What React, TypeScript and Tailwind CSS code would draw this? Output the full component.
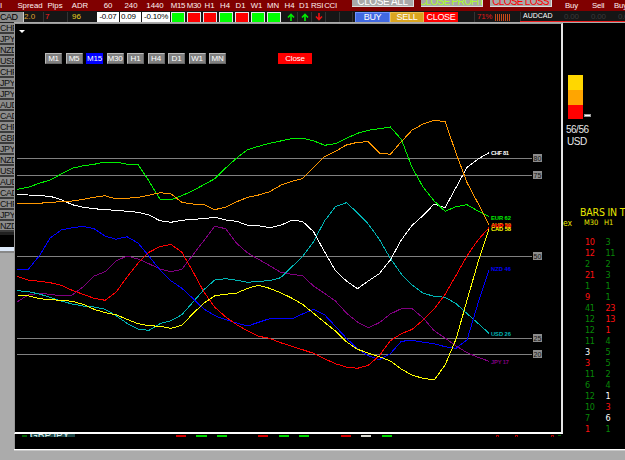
import clsx from 'clsx';

interface Column {
  label: string;
  width: string;
}

interface Series {
  name: string;
  value: number;
  color: string;
  labelY: number;
  points: number[];
}

const columns: Column[] = [
  { label: 'I', width: 'w-[2px]' },
  { label: 'Spread', width: 'ml-[14px] w-[28px]' },
  { label: 'Pips', width: 'w-[22px]' },
  { label: 'ADR', width: 'w-[28px]' },
  { label: '60', width: 'w-[28px]' },
  { label: '240', width: 'w-[18px]' },
  { label: '1440', width: 'w-[30px]' },
  { label: 'M15', width: 'w-[16px] tracking-[-0.3px]' },
  { label: 'M30', width: 'w-[16px] tracking-[-0.3px]' },
  { label: 'H1', width: 'w-[15px]' },
  { label: 'H4', width: 'w-[16px]' },
  { label: 'D1', width: 'w-[15px]' },
  { label: 'W1', width: 'w-[17px]' },
  { label: 'MN', width: 'w-[16px]' },
  { label: 'H4', width: 'w-[17px]' },
  { label: 'D1', width: 'w-[12px]' },
  { label: 'RSI', width: 'w-[14px] tracking-[-0.3px]' },
  { label: 'CCI', width: 'w-[13px] tracking-[-0.3px]' },
];

const signals = ['up', 'down', 'down', 'up', 'down', 'up', 'up'];

const pairs = [
  'CHF', 'JPY', 'NZD', 'USD', 'CHF', 'JPY', 'JPY', 'AUD', 'CAD', 'CHF',
  'GBP', 'JPY', 'NZD', 'USD', 'AUD', 'CAD', 'CHF', 'JPY', 'NZD',
];

const timeframes = ['M1', 'M5', 'M15', 'M30', 'H1', 'H4', 'D1', 'W1', 'MN'];

// r = red, g = green, w = white
const bars: [number, string, number, string][] = [
  [10, 'r', 3, 'g'],
  [12, 'r', 11, 'g'],
  [2, 'g', 2, 'g'],
  [21, 'r', 3, 'g'],
  [1, 'g', 1, 'g'],
  [9, 'r', 1, 'g'],
  [41, 'g', 23, 'r'],
  [12, 'g', 13, 'r'],
  [12, 'g', 1, 'r'],
  [11, 'g', 4, 'g'],
  [3, 'w', 5, 'g'],
  [3, 'r', 5, 'g'],
  [11, 'g', 2, 'g'],
  [6, 'g', 4, 'g'],
  [12, 'g', 1, 'w'],
  [10, 'g', 3, 'r'],
  [7, 'g', 6, 'w'],
  [1, 'r', 1, 'g'],
];

const barColors: Record<string, string> = {
  r: 'text-[#ff1010]',
  g: 'text-[#078807]',
  w: 'text-white',
};

const levels = [
  { value: 80, y: 158.5 },
  { value: 75, y: 175.5 },
  { value: 50, y: 256.5 },
  { value: 25, y: 338.5 },
  { value: 20, y: 354.5 },
];

const series: Series[] = [
  {
    name: 'JPY', value: 17, color: '#800080', labelY: 361.5,
    points: [301.7, 295, 293.3, 294.3, 296, 295, 286.7, 276, 271.7, 261, 256, 259, 263.7, 269, 271.7, 269.3, 255, 240.7, 226.3, 228.7, 243.3, 253, 259.3, 265.7, 272.2, 274.3, 275.7, 286, 293.3, 301, 313, 322, 327.7, 322.7, 314, 308.7, 308.7, 318, 330.7, 338, 346, 352.7, 357.3, 361.3],
  },
  {
    name: 'USD', value: 26, color: '#00b4b4', labelY: 334,
    points: [290.7, 291.7, 294, 297.3, 301, 304, 306, 307, 309.3, 315.7, 323.3, 329, 330.3, 323.7, 320.7, 314.7, 302.3, 289.7, 280, 278.7, 280.3, 282.3, 281.3, 280.7, 277.7, 267, 256.7, 241.7, 221, 206.7, 202.7, 212.7, 224, 239.3, 258.3, 274, 285, 293.3, 296.3, 297.3, 303.7, 313.7, 323.3, 333.3],
  },
  {
    name: 'NZD', value: 46, color: '#0000ff', labelY: 269,
    points: [269.3, 269.3, 256, 238, 230, 227.7, 226.3, 228.7, 236, 239.3, 236.7, 243, 256, 270, 280.7, 288.3, 298.3, 309, 315.7, 319.7, 323, 326, 322.3, 318.7, 318.3, 319, 314, 309.3, 314.7, 326.3, 338.3, 348.7, 355.7, 359.7, 353.7, 341.3, 340.3, 342.3, 343.7, 346.7, 348.3, 339.7, 303.3, 269.7],
  },
  {
    name: 'CHF', value: 81, color: '#ffffff', labelY: 152.5,
    points: [194.3, 195, 195.7, 196.3, 199.7, 204.7, 207.3, 208.7, 209.7, 210.3, 211.3, 212.3, 215, 220.7, 222.3, 220.3, 219.3, 218.7, 217.3, 220, 221.3, 225.3, 225.7, 227.7, 225.3, 220.3, 221.3, 231.7, 251.7, 270.7, 281, 288.7, 281, 273.7, 260, 240, 225.3, 215.3, 204, 207.7, 187.3, 167.3, 159, 152.7],
  },
  {
    name: 'EUR', value: 62, color: '#00f000', labelY: 217.5,
    points: [189.3, 187.3, 183.3, 180, 174, 168.3, 165.7, 164.3, 162, 162, 164.3, 164.3, 181, 199, 199.7, 195.7, 190.7, 184.7, 178.7, 168, 158, 149.7, 146.3, 143.3, 141, 138.7, 138.3, 140.7, 145.3, 143.7, 138.3, 133.3, 130.3, 128.7, 127, 139.3, 167.7, 187.3, 201, 211.3, 206.7, 204.7, 211, 216.3],
  },
  {
    name: 'AUD', value: 59, color: '#ff9800', labelY: 225,
    points: [203.3, 204, 203.3, 202.3, 201.7, 201, 199.3, 197.3, 195.7, 199, 198.3, 197.3, 195.3, 192.7, 193.7, 202.3, 204, 204.3, 209.7, 207, 201.7, 197.3, 195, 191.7, 185.3, 181.3, 178.7, 167.3, 156.7, 151.3, 145, 142.3, 141.7, 153, 154.3, 141.7, 130, 124, 120.3, 121.7, 153.3, 182.7, 203.3, 225],
  },
  {
    name: 'GBP', value: 59, color: '#ff0000', labelY: 226,
    points: [276.3, 280, 281.3, 282.7, 285.3, 290.3, 294.3, 298.3, 300.3, 292.3, 277, 263.3, 252.3, 246.7, 244.3, 252.3, 271.3, 291.7, 307.3, 317, 324.7, 331, 336.3, 338.3, 342.7, 346.3, 349.7, 353.3, 358.7, 363.7, 367, 368.3, 365.3, 355.7, 340.7, 333.7, 329.3, 320, 309, 294.3, 275.3, 255.7, 240, 227.7],
  },
  {
    name: 'CAD', value: 58, color: '#ffff00', labelY: 228.5,
    points: [295, 295.7, 298.7, 299.7, 300.3, 301.3, 304.3, 309.3, 312.7, 314.7, 319.3, 323.7, 325.7, 326.3, 328.3, 325.3, 313.7, 303.3, 295.7, 294.3, 293, 288.3, 285.3, 288.3, 292.7, 298, 304.3, 313.3, 322.3, 331, 341.7, 349.3, 353, 356.7, 361, 369, 375.3, 378.3, 380, 365, 339, 300, 262.3, 229],
  },
];

const toPolyline = (points: number[]) =>
  points.map((y, i) => `${(17.3 + i * 10.97).toFixed(1)},${y}`).join(' ');

const Arrow = ({ down = false }: { down?: boolean }) => (
  <svg viewBox="0 0 8 8" className={clsx('h-[8px] w-[8px]', down ? 'rotate-180 text-[#ee1111]' : 'text-[#00ee00]')}>
    <path d="M4 8V1.5M1 4.5L4 1.3L7 4.5" fill="none" stroke="currentColor" strokeWidth="1.6" />
  </svg>
);

const HeaderRow = () => (
  <div className="flex h-[11px] shrink-0 overflow-hidden bg-[#800000] text-[7.8px] leading-[11px] text-[#fff0f0]">
    {columns.map((col, i) => (
      <span key={i} className={clsx('flex shrink-0 justify-center whitespace-nowrap', col.width)}>{col.label}</span>
    ))}
    <div className="ml-[15px] flex shrink-0 gap-[7px] text-[10px] leading-[4px]">
      <span className="flex h-[7px] w-[62px] justify-center border-r border-b border-[#ddd] bg-[#a9a9a9] tracking-[-0.4px] whitespace-nowrap text-white">CLOSE ALL</span>
      <span className="flex h-[7px] w-[62px] justify-center overflow-hidden border-r border-b border-[#ddd] bg-[#a9a9a9] tracking-[-0.7px] whitespace-nowrap text-[#adff2f]">CLOSE PROFIT</span>
      <span className="flex h-[7px] w-[62px] justify-center border-r border-b border-[#ddd] bg-[#a9a9a9] tracking-[-0.7px] whitespace-nowrap text-[#ff0000]">CLOSE LOSS</span>
    </div>
    <span className="ml-[13px] w-[27px] shrink-0 tracking-[-0.2px]">Buy</span>
    <span className="w-[22px] shrink-0 tracking-[-0.2px]">Sell</span>
    <span className="shrink-0 tracking-[-0.2px]">Buy</span>
  </div>
);

const PairRow = () => (
  <div className="flex h-[11px] shrink-0 overflow-hidden bg-[#161616] pt-px text-[8px] leading-[10px]">
    <span className="w-[24px] shrink-0 border-r border-[#ccc] bg-[#8b8b8b] text-[9px] tracking-[-0.5px] text-black">CAD</span>
    <span className="w-[20px] shrink-0 border-r border-[#333] text-[#e0a030]">2.0</span>
    <span className="w-[24px] shrink-0 border-r border-[#333] pl-px text-[#ff2020]">7</span>
    <span className="w-[29px] shrink-0 pl-[4px] text-[#e6d020]">96</span>
    <div className="flex w-[73px] shrink-0 gap-px tracking-[-0.2px] text-black">
      <span className="w-[22px] bg-white text-center">-0.07</span>
      <span className="w-[21px] bg-white pl-px">0.09</span>
      <span className="w-[28px] bg-white text-center">-0.10%</span>
    </div>
    <div className="ml-px flex shrink-0 gap-[2px]">
      {signals.map((signal, i) => (
        <span key={i} className={clsx('w-[14px] border border-b-0 border-[#e8e8e8]', signal === 'up' ? 'bg-[#00ff00]' : 'bg-[#ff0000]')} />
      ))}
    </div>
    <div className="ml-[3px] flex shrink-0">
      <span className="flex w-[14px] items-center justify-center border-r border-[#333]"><Arrow /></span>
      <span className="flex w-[14px] items-center justify-center border-r border-[#333]"><Arrow /></span>
      <span className="flex w-[14px] items-center justify-center border-r border-[#333]"><Arrow down /></span>
      <span className="w-[14px] border-r border-[#333]" />
      <span className="w-[13px] border-r border-[#333]" />
    </div>
    <div className="ml-[2px] flex shrink-0 text-center text-[9px] tracking-[-0.3px] text-white">
      <span className="w-[35px] border border-b-0 border-[#6e93ff] bg-[#4169e1] leading-[9px]">BUY</span>
      <span className="w-[34px] border border-b-0 border-[#e8bf50] bg-[#daa520] leading-[9px]">SELL</span>
      <span className="w-[34px] bg-[#ff0000]">CLOSE</span>
    </div>
    <span className="w-[17px] shrink-0 border-r border-[#333]" />
    <span className="w-[20px] shrink-0 pl-[2px] tracking-[-0.3px] text-[#e01818]">71%</span>
    <div className="flex shrink-0 items-end gap-px pb-px">
      {Array.from({ length: 8 }).map((_, i) => (
        <span key={i} className="h-[7px] w-px bg-[#c84818]" />
      ))}
    </div>
    <div className="ml-[10px] flex w-[105px] shrink-0 border-b border-[#f02020] text-[#3a3a3a]">
      <span className="w-[44px] shrink-0 border-l border-[#333] pl-[2px] text-[7px] leading-[8px] text-white">AUDCAD</span>
      <span className="w-[27px] shrink-0 tracking-[-0.2px]">0.00</span>
      <span className="w-[27px] shrink-0 tracking-[-0.2px]">0.00</span>
      <span className="shrink-0 tracking-[-0.2px]">0.00</span>
    </div>
  </div>
);

const PairList = () => (
  <div className="flex w-[14px] shrink-0 flex-col overflow-hidden">
    <div className="h-[213px] shrink-0 overflow-hidden bg-[#202020] pt-px">
      {pairs.map((pair, i) => (
        <div key={i} className="h-[11px] overflow-hidden border-b-2 border-[#3a3a3a] bg-[#8b8b8b] text-[9px] leading-[10px] tracking-[-0.5px] text-[#111]">
          {pair}
        </div>
      ))}
    </div>
    <div className="h-[12px] shrink-0 bg-black" />
    <div className="h-[4px] shrink-0 bg-[#dce8f8]" />
    <div className="h-[2px] shrink-0 bg-[#888]" />
  </div>
);

const StrengthChart = () => (
  <div className="flex w-[549px] shrink-0 flex-col border-t border-r-2 border-b-2 border-l border-t-[#999] border-r-[#e4e4e4] border-b-white border-l-[#999] bg-black">
    <div className="h-[29px] shrink-0 pt-[6px] pl-[4px]">
      <svg viewBox="0 0 6 3" className="h-[3px] w-[6px]">
        <path d="M0 0H6L3 3Z" fill="#fff" />
      </svg>
    </div>
    <div className="flex h-[27px] shrink-0 items-start pl-[30px] text-[8px] text-white">
      <div className="flex gap-[3.5px]">
        {timeframes.map((tf) => (
          <span
            key={tf}
            className={clsx(
              'flex h-[11px] w-[17px] justify-center border leading-[9.5px] tracking-[-0.2px]',
              tf === 'M15' ? 'border-[#0000ff] bg-[#0000ff]' : 'border-t-[#bbb] border-r-[#666] border-b-[#666] border-l-[#bbb] bg-[#808080]',
            )}
          >
            {tf}
          </span>
        ))}
      </div>
      <span className="ml-[52px] h-[11px] w-[34px] bg-[#ff0000] text-center leading-[11px] tracking-[-0.2px]">Close</span>
    </div>
    <svg viewBox="15 80 546 352" className="h-[352px] w-[546px] shrink-0">
      {levels.map((level) => (
        <g key={level.value}>
          <line x1="17" x2="532" y1={level.y} y2={level.y} stroke="#808080" />
          <rect x="533" y={level.y - 4.5} width="9" height="8" fill="#8c8c8c" />
          <text x="537.5" y={level.y + 2.3} textAnchor="middle" fontSize="7" fill="#111">{level.value}</text>
        </g>
      ))}
      {series.map((s) => (
        <g key={s.name}>
          <polyline points={toPolyline(s.points)} fill="none" stroke={s.color} strokeWidth="1" shapeRendering="crispEdges" />
          <text x="491" y={s.labelY + 2} fontSize="5.8" fontWeight="bold" textLength={s.name === 'CHF' || s.name === 'JPY' ? 18 : 20} fill={s.color}>
            {s.name} {s.value}
          </text>
        </g>
      ))}
    </svg>
  </div>
);

const SidePanel = () => (
  <div className="flex w-[62px] shrink-0 flex-col overflow-hidden bg-black">
    <div className="mt-[52px] flex items-end pl-[5px]">
      <div className="w-[15px]">
        <div className="h-[15px] bg-[#ffd700]" />
        <div className="h-[15px] bg-[#ffa500]" />
        <div className="h-[14px] bg-[#ff0000]" />
      </div>
      <div className="mb-[2px] ml-px h-[3px] w-[7px] border border-[#999] bg-white" />
    </div>
    <div className="mt-[5px] pl-[3px] text-[10px] leading-[12px] tracking-[-0.5px] text-[#e8e8e8]">
      <div>56/56</div>
      <div className="pl-px">USD</div>
    </div>
    <div className="mt-[58px] pl-[17px] font-['DejaVu_Sans_Condensed','DejaVu_Sans',sans-serif] text-[10.5px] leading-[12px] tracking-[-0.2px] whitespace-nowrap text-[#e8e800]">
      BARS IN T
    </div>
    <div className="flex font-['DejaVu_Sans_Condensed','DejaVu_Sans',sans-serif] text-[7.5px] leading-[10px] tracking-[-0.1px] text-[#e8e800]">
      <span className="w-[21px] text-[8.5px]">ex</span>
      <span className="w-[20px]">M30</span>
      <span>H1</span>
    </div>
    <div className="mt-[9px] pl-[22px] font-['DejaVu_Sans_Condensed','DejaVu_Sans',sans-serif] text-[9px] leading-[11px] tracking-[-0.3px]">
      {bars.map(([m30, m30Color, h1, h1Color], i) => (
        <div key={i} className="flex h-[11px]">
          <span className={clsx('w-[20.5px]', barColors[m30Color])}>{m30}</span>
          <span className={barColors[h1Color]}>{h1}</span>
        </div>
      ))}
    </div>
  </div>
);

// Top edge of the row that continues below the chart window
const BottomStrip = () => (
  <div className="flex h-[15px] shrink-0 items-start border-l border-[#999] bg-black">
    <div className="mt-px ml-[7px] h-[2px] w-[5px] bg-[#006000]" />
    <div className="ml-[3px] h-[3px] w-[45px] overflow-hidden bg-[#1d4848] text-[10px] text-[#d8e8e8]">
      <div className="-mt-[3px] leading-[9px]">GBPJPY</div>
    </div>
    <div className="mt-px ml-[101px] flex h-[2px]">
      <span className="w-[10px] bg-[#d80000]" />
      <span className="ml-[10px] w-[11px] bg-[#00d800]" />
      <span className="ml-[10px] w-[10px] bg-[#00d800]" />
      <span className="ml-[31px] w-[10px] bg-[#d80000]" />
      <span className="ml-[11px] w-[10px] bg-[#00d800]" />
      <span className="ml-[10px] w-[10px] bg-[#00d800]" />
      <span className="ml-[32px] w-[10px] bg-[#d80000]" />
      <span className="ml-[10px] w-[10px] bg-[#d8d8d0]" />
      <span className="ml-[11px] w-[10px] bg-[#00d800]" />
      <span className="ml-[104px] w-[3px] border border-b-0 border-[#b00000]" />
      <span className="ml-[16px] w-[3px] border border-b-0 border-[#b00000]" />
      <span className="ml-[33px] w-[3px] border border-b-0 border-[#b00000]" />
      <span className="ml-[4px] h-px w-[3px] bg-[#006000]" />
    </div>
  </div>
);

export default function App() {
  return (
    <div className="flex h-[460px] w-[625px] flex-col overflow-hidden bg-[#ababab] font-['Liberation_Sans',Arial,sans-serif]">
      <HeaderRow />
      <PairRow />
      <div className="flex min-h-0 flex-1">
        <PairList />
        <div className="flex w-[611px] shrink-0 flex-col">
          <div className="mt-px flex h-[411px] shrink-0">
            <StrengthChart />
            <SidePanel />
          </div>
          <BottomStrip />
          <div className="h-px shrink-0 bg-white" />
          <div className="h-px shrink-0 bg-[#c8c8c8]" />
        </div>
      </div>
    </div>
  );
}
